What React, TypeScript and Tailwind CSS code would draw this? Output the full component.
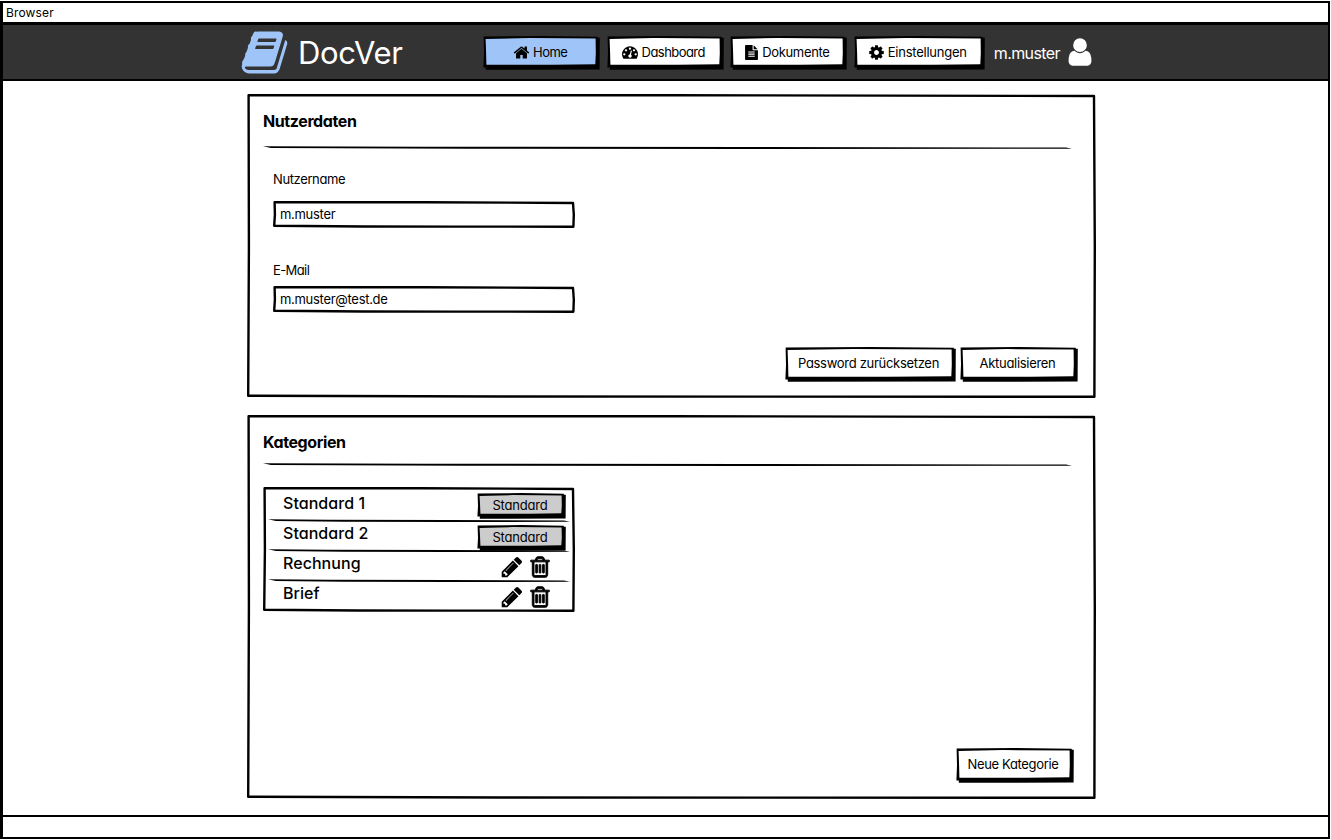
import type { ReactNode } from 'react';

const FONT = "font-[Inter,'Noto_Sans',sans-serif] [font-feature-settings:'cv11','ss03']";

const ICONS = {
  home: 'M1472 992v480q0 26-19 45t-45 19h-384v-384h-256v384h-384q-26 0-45-19t-19-45v-480q0-1 .5-3t.5-3l575-474 575 474q1 2 1 6zm223-69l-62 74q-8 9-21 11h-3q-13 0-21-7l-692-577-692 577q-12 8-24 7-13-2-21-11l-62-74q-8-10-7-23.5t11-21.5l719-599q32-26 76-26t76 26l244 204v-195q0-14 9-23t23-9h192q14 0 23 9t9 23v408l219 182q10 8 11 21.5t-7 23.5z',
  book: 'M1703 478q40 57 18 129l-275 906q-19 64-76.5 107.5t-122.5 43.5h-923q-77 0-148.5-53.5t-99.5-131.5q-24-67-2-127 0-4 3-27t4-37q1-8-3-21.5t-3-19.5q2-11 8-21t16.5-23.5 16.5-23.5q23-38 45-91.5t30-91.5q3-10 .5-30t-.5-28q3-11 17-28t17-23q21-36 42-92t25-90q1-9-2.5-32t.5-28q4-13 22-30.5t22-22.5q19-26 42.5-84.5t27.5-96.5q1-8-3-25.5t-2-26.5q2-8 9-18t18-23 17-21q8-12 16.5-30.5t15-35 16-36 19.5-32 26.5-23.5 36-11.5 47.5 5.5l-1 3q38-9 51-9h761q74 0 114 56t18 130l-274 906q-36 119-71.5 153.5t-128.5 34.5h-869q-27 0-38 15-11 16-1 43 24 70 144 70h923q29 0 56-15.5t35-41.5l300-987q7-22 5-57 38 15 59 43zm-1064 2q-4 13 2 22.5t20 9.5h608q13 0 25.5-9.5t16.5-22.5l21-64q4-13-2-22.5t-20-9.5h-608q-13 0-25.5 9.5t-16.5 22.5zm-83 256q-4 13 2 22.5t20 9.5h608q13 0 25.5-9.5t16.5-22.5l21-64q4-13-2-22.5t-20-9.5h-608q-13 0-25.5 9.5t-16.5 22.5z',
  cog: 'M1152 896q0-106-75-181t-181-75-181 75-75 181 75 181 181 75 181-75 75-181zm512-109v222q0 12-8 23t-20 13l-185 28q-19 54-39 91 35 50 107 138 10 12 10 25t-9 23q-27 37-99 108t-94 71q-12 0-26-9l-138-108q-44 23-91 38-16 136-29 186-7 28-36 28h-222q-14 0-24.5-8.5t-11.5-21.5l-28-184q-49-16-90-37l-141 107q-10 9-25 9-14 0-25-11-126-114-165-168-7-10-7-23 0-12 8-23 15-21 51-66.5t54-70.5q-27-50-41-99l-183-27q-13-2-21-12.5t-8-23.5v-222q0-12 8-23t19-13l186-28q14-46 39-92-40-57-107-138-10-12-10-24 0-10 9-23 26-36 98.5-107.5t94.5-71.5q13 0 26 10l138 107q44-23 91-38 16-136 29-186 7-28 36-28h222q14 0 24.5 8.5t11.5 21.5l28 184q49 16 90 37l142-107q9-9 24-9 13 0 25 10 129 119 165 170 7 8 7 22 0 12-8 23-15 21-51 66.5t-54 70.5q26 50 41 98l183 28q13 2 21 12.5t8 23.5z',
  pencil: 'M491 1536l91-91-235-235-91 91v107h128v128h107zm523-928q0-22-22-22-10 0-17 7l-542 542q-7 7-7 17 0 22 22 22 10 0 17-7l542-542q7-7 7-17zm-54-192l416 416-832 832h-416v-416zm683 96q0 53-37 90l-166 166-416-416 166-165q36-38 90-38 53 0 91 38l235 234q37 39 37 91z',
  trash: 'M704 736v576q0 14-9 23t-23 9h-64q-14 0-23-9t-9-23v-576q0-14 9-23t23-9h64q14 0 23 9t9 23zm256 0v576q0 14-9 23t-23 9h-64q-14 0-23-9t-9-23v-576q0-14 9-23t23-9h64q14 0 23 9t9 23zm256 0v576q0 14-9 23t-23 9h-64q-14 0-23-9t-9-23v-576q0-14 9-23t23-9h64q14 0 23 9t9 23zm128 724v-948h-896v948q0 22 7 40.5t14.5 27 10.5 8.5h832q3 0 10.5-8.5t14.5-27 7-40.5zm-672-1076h448l-48-117q-7-9-17-11h-317q-10 2-17 11zm928 32v64q0 14-9 23t-23 9h-96v948q0 83-47 143.5t-113 60.5h-832q-66 0-113-58.5t-47-141.5v-952h-96q-14 0-23-9t-9-23v-64q0-14 9-23t23-9h309l70-167q15-37 54-63t79-26h320q40 0 79 26t54 63l70 167h309q14 0 23 9t9 23z',
  file: 'M1596 476q14 14 28 36h-472v-472q22 14 36 28zm-476 164h544v1056q0 40-28 68t-68 28h-1344q-40 0-68-28t-28-68v-1600q0-40 28-68t68-28h800v544q0 40 28 68t68 28zm160 736v-64q0-14-9-23t-23-9h-704q-14 0-23 9t-9 23v64q0 14 9 23t23 9h704q14 0 23-9t9-23zm0-256v-64q0-14-9-23t-23-9h-704q-14 0-23 9t-9 23v64q0 14 9 23t23 9h704q14 0 23-9t9-23zm0-256v-64q0-14-9-23t-23-9h-704q-14 0-23 9t-9 23v64q0 14 9 23t23 9h704q14 0 23-9t9-23z',
  gauge: 'M384 1152q0-53-37.5-90.5t-90.5-37.5-90.5 37.5-37.5 90.5 37.5 90.5 90.5 37.5 90.5-37.5 37.5-90.5zm192-448q0-53-37.5-90.5t-90.5-37.5-90.5 37.5-37.5 90.5 37.5 90.5 90.5 37.5 90.5-37.5 37.5-90.5zm428 481l101-382q6-26-7.5-48.5t-38.5-29.5-48 6.5-30 39.5l-101 382q-60 5-107 43.5t-63 98.5q-20 77 20 146t117 89 146-20 89-117q16-60-6-117t-72-91zm660-33q0-53-37.5-90.5t-90.5-37.5-90.5 37.5-37.5 90.5 37.5 90.5 90.5 37.5 90.5-37.5 37.5-90.5zm-640-640q0-53-37.5-90.5t-90.5-37.5-90.5 37.5-37.5 90.5 37.5 90.5 90.5 37.5 90.5-37.5 37.5-90.5zm448 192q0-53-37.5-90.5t-90.5-37.5-90.5 37.5-37.5 90.5 37.5 90.5 90.5 37.5 90.5-37.5 37.5-90.5zm320 448q0 261-141 483-19 29-54 29h-1402q-35 0-54-29-141-221-141-483 0-182 71-348t191-286 286-191 348-71 348 71 286 191 191 286 71 348z',
  user: 'M1536 1399q0 109-62.5 187t-150.5 78h-854q-88 0-150.5-78t-62.5-187q0-85 8.5-160.5t31.5-152 58.5-131 94-89 134.5-34.5q131 128 313 128t313-128q76 0 134.5 34.5t94 89 58.5 131 31.5 152 8.5 160.5zm-256-887q0 159-112.5 271.5t-271.5 112.5-271.5-112.5-112.5-271.5 112.5-271.5 271.5-112.5 271.5 112.5 112.5 271.5z',
};

function Icon({ name, className }: { name: keyof typeof ICONS; className: string }) {
  return (
    <svg viewBox="0 0 1792 1792" fill="currentColor" className={`shrink-0 overflow-visible ${className}`} aria-hidden="true">
      <path d={ICONS[name]} />
    </svg>
  );
}

/* Hand-drawn outline that sits behind the content of a box. */
function Outline({ w, h }: { w: number; h: number }) {
  const r = w - 1.5;
  const b = h - 1.5;
  return (
    <svg viewBox={`0 0 ${w} ${h}`} className="pointer-events-none absolute inset-0 size-full" fill="none" stroke="#000" strokeWidth="2.4" strokeLinejoin="round" aria-hidden="true">
      <path d={`M1.6 1.2L${w * 0.5} 1.2L${r - 0.5} 2L${r + 0.3} ${h * 0.5}L${r - 0.1} ${b + 0.2}L${w * 0.6} ${b + 0.1}L${w * 0.3} ${b}L1.2 ${b - 0.7}L1.9 ${h * 0.5}Z`} />
    </svg>
  );
}

/* Button with a hand-drawn border and a hard drop shadow. */
function Button({ w, h, fill = '#fff', className = '', children }: { w: number; h: number; fill?: string; className?: string; children: ReactNode }) {
  return (
    <button type="button" className={`relative isolate flex shrink-0 items-center text-[13px] leading-4 whitespace-nowrap ${className}`} style={{ width: w, height: h }}>
      <svg viewBox={`0 0 ${w} ${h}`} className="absolute inset-0 -z-10 size-full" aria-hidden="true">
        <path d={`M.6 .6L${w * 0.5} 0L${w - 2.4} .7L${w - 2} 1.7L${w - 0.2} 1.7L${w - 0.4} ${h - 0.4}L2.8 ${h - 0.2}V${h - 2.4}H.4L1 ${h * 0.5}Z`} fill="#000" />
        <path d={`M2.6 2.9L${w * 0.4} 2.1L${w - 4.4} 2.6L${w - 4.2} ${h * 0.5}L${w - 4.7} ${h - 5.7}L${w * 0.6} ${h - 5.3}L3.4 ${h - 5.2}L3.1 ${h * 0.5}Z`} fill={fill} />
      </svg>
      {children}
    </button>
  );
}

function Rule({ w, className = '' }: { w: number; className?: string }) {
  return (
    <svg viewBox={`0 0 ${w} 4`} className={`block h-1 shrink-0 ${className}`} style={{ width: w }} aria-hidden="true">
      <path d={`M0 .3L${w * 0.2} .8L${w * 0.6} 1L${w - 6} 1.5L${w} 2.8L${w * 0.6} 3L${w * 0.25} 2.7L8 2Z`} fill="#000" />
    </svg>
  );
}

function Field({ value }: { value: string }) {
  return (
    <div className="relative ml-[10px] flex h-[27px] w-[302px] pt-[5px] pl-[7px]">
      <Outline w={302} h={27} />
      <span className="text-[13px] leading-4 tracking-[-0.3px]">{value}</span>
    </div>
  );
}

function Row({ name, locked }: { name: string; locked?: boolean }) {
  return (
    <div className="flex h-[30px] pl-5">
      <span className="w-[195px] pt-[6px] text-[16px] leading-5 font-medium tracking-[0.05px]">{name}</span>
      {!locked && (
        <span className="flex pt-[8px] pl-[22px]">
          <Icon name="pencil" className="h-[24px] w-[24px]" />
          <Icon name="trash" className="ml-[4px] h-[24px] w-[24px] stroke-black stroke-[70px]" />
        </span>
      )}
    </div>
  );
}

export default function App() {
  return (
    <div className={`${FONT} flex h-[840px] w-[1331px] flex-col overflow-hidden bg-white pt-px pr-px text-black`}>
      <div className="flex h-[838px] flex-col border-x-[2.5px] border-y-[2.5px] border-l-[3px] border-black">
        <div className="h-[22px] shrink-0 border-b-[3px] border-black pt-[2px] pl-[3px] text-[12px] leading-4 tracking-[0.15px]">Browser</div>
        <header className="flex h-[56px] shrink-0 border-b-2 border-black bg-[#333] pl-[237px] text-white">
          <Icon name="book" className="mt-[3px] h-[49px] w-[49px] text-[#9fc5f8]" />
          <span className="mt-[8px] ml-[9px] w-[185px] text-[31px] leading-10 tracking-[-0.35px]">DocVer</span>
          <nav className="mt-[11px] flex gap-[6.6px] text-black">
            <Button w={117} h={34} fill="#9fc5f8" className="pb-[2px] pl-[30px]">
              <Icon name="home" className="mr-[3px] size-[17px]" />
              <span className="tracking-[-0.5px]">Home</span>
            </Button>
            <Button w={117} h={34} className="pb-[2px] pl-[15px]">
              <Icon name="gauge" className="mr-[4px] size-[16px]" />
              <span className="tracking-[-0.55px]">Dashboard</span>
            </Button>
            <Button w={117} h={34} className="pb-[2px] pl-[14px]">
              <Icon name="file" className="mr-[3px] size-[15px]" />
              <span className="tracking-[-0.33px]">Dokumente</span>
            </Button>
            <Button w={131} h={34} className="pb-[2px] pl-[14px]">
              <Icon name="cog" className="mr-[3px] size-[17px]" />
              <span className="tracking-[-0.25px]">Einstellungen</span>
            </Button>
          </nav>
          <span className="mt-[18px] ml-[9px] w-[70px] text-[16px] leading-5 tracking-[-0.6px]">m.muster</span>
          <Icon name="user" className="mt-[11px] h-[32px] w-[32px]" />
        </header>
        <main className="flex grow flex-col gap-[17px] pt-[13px] pl-[244px]">
          <section className="relative h-[304px] w-[849px] shrink-0 pl-4">
            <Outline w={849} h={304} />
            <h2 className="pt-[17px] text-[16px] leading-5 font-bold tracking-[-0.4px]">Nutzerdaten</h2>
            <Rule w={809} className="mt-[15px]" />
            <div className="mt-[21px] ml-[10px] text-[13px] leading-4 tracking-[-0.38px]">Nutzername</div>
            <div className="mt-[14px]"><Field value="m.muster" /></div>
            <div className="mt-[34px] ml-[10px] text-[13px] leading-4 tracking-[-0.6px]">E-Mail</div>
            <div className="mt-[8px]"><Field value="m.muster@test.de" /></div>
            <div className="mt-[34px] flex gap-[4px] pl-[522px]">
              <Button w={171} h={35} className="justify-center pr-[4px] pb-[3px]"><span className="tracking-[-0.3px]">Password zurücksetzen</span></Button>
              <Button w={118} h={35} className="justify-center pr-[3px] pb-[3px]"><span className="tracking-[-0.3px]">Aktualisieren</span></Button>
            </div>
          </section>
          <section className="relative h-[384px] w-[849px] shrink-0 pl-4">
            <Outline w={849} h={384} />
            <h2 className="pt-[17px] text-[16px] leading-5 font-bold tracking-[-0.4px]">Kategorien</h2>
            <Rule w={809} className="mt-[11px]" />
            <div className="relative mt-[20px] h-[125px] w-[312px]">
              <Outline w={312} h={125} />
              <Row name="Standard 1" locked />
              <Rule w={302} className="mt-[2px] -mb-[6px] ml-[5px]" />
              <Row name="Standard 2" locked />
              <Rule w={302} className="mt-[2px] -mb-[6px] ml-[5px]" />
              <Row name="Rechnung" />
              <Rule w={302} className="mt-[2px] -mb-[6px] ml-[5px]" />
              <Row name="Brief" />
              <div className="absolute top-[6px] left-[214px] flex flex-col gap-[6px]">
                <Button w={89} h={26} fill="#ccc" className="justify-center pr-[3px] pb-[2px]"><span className="tracking-[-0.2px]">Standard</span></Button>
                <Button w={89} h={26} fill="#ccc" className="justify-center pr-[3px] pb-[2px]"><span className="tracking-[-0.2px]">Standard</span></Button>
              </div>
            </div>
            <div className="mt-[136px] pl-[693px]">
              <Button w={118} h={35} className="justify-center pr-[4px] pb-[3px]"><span className="tracking-[-0.35px]">Neue Kategorie</span></Button>
            </div>
          </section>
        </main>
        <footer className="h-[22px] shrink-0 border-t-[2.5px] border-black" />
      </div>
    </div>
  );
}
